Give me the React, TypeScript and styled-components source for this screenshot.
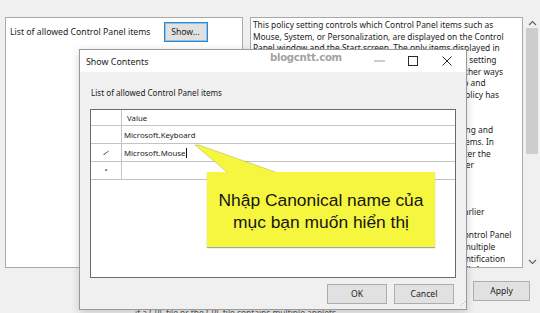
import React, { FC } from "react";
import styled, { createGlobalStyle } from "styled-components";

const GlobalStyle = createGlobalStyle`
  html, body {
    margin: 0;
    padding: 0;
    background: #f0f0f0;
  }
  body {
    width: 540px;
    height: 313px;
    overflow: hidden;
    font-family: "Noto Sans", "Open Sans", sans-serif;
    color: #1c1c1c;
  }
`;

const StyledScreenDiv = styled.div`
  position: relative;
  width: 540px;
  height: 313px;
  overflow: hidden;
  background: #f0f0f0;
`;

const StyledMainWindowDiv = styled.div`
  display: flex;
  flex-direction: column;
  padding-top: 17px;
`;

const StyledPanelRowDiv = styled.div`
  display: flex;
  height: 251px;
`;

const StyledOptionsPanelDiv = styled.div`
  margin-left: 5px;
  width: 231px;
  background: #fff;
  border: 1px solid #a9a9a9;
  padding: 4px 4px;
`;

const StyledOptionRowDiv = styled.div`
  display: flex;
  align-items: center;
  gap: 13px;
`;

const StyledSmallText = styled.span<{ size?: number }>`
  font-size: ${({ size }) => size ?? 8.4}px;
  white-space: nowrap;
  color: #1c1c1c;
`;

const StyledWinButton = styled.button<{ width: number; focused?: boolean }>`
  width: ${({ width }) => width}px;
  height: 20px;
  padding: 0;
  background: #e1e1e1;
  border: 1px solid ${({ focused }) => (focused ? "#2f86d6" : "#adadad")};
  box-shadow: ${({ focused }) => (focused ? "inset 0 0 0 1px #8fc0ea" : "none")};
  font-family: "Noto Sans", "Open Sans", sans-serif;
  font-size: 8.6px;
  color: #1c1c1c;
`;

const StyledHelpPanelDiv = styled.div`
  margin-left: 7px;
  width: 273px;
  background: #fff;
  border: 1px solid #a9a9a9;
  padding: 1px 0 0 2px;
  overflow: hidden;
`;

const StyledHelpLineDiv = styled.div`
  height: 11.7px;
  line-height: 11.7px;
  font-size: 8.4px;
  white-space: nowrap;
  color: #1c1c1c;
`;

const StyledScrollBarDiv = styled.div`
  width: 16px;
  margin-left: 1px;
  display: flex;
  flex-direction: column;
  align-items: center;
  padding: 3px 0;
`;

const StyledScrollThumbDiv = styled.div`
  width: 12px;
  height: 126px;
  margin-top: 2px;
  background: #cdcdcd;
`;

const StyledScrollSpacerDiv = styled.div`
  flex: 1;
`;

const StyledButtonRowDiv = styled.div`
  display: flex;
  justify-content: flex-end;
  padding-right: 10px;
  margin-top: 13px;
`;

const StyledFooterDiv = styled.div`
  margin-top: 6px;
  padding-left: 135px;
  font-size: 8.4px;
  color: #555;
  white-space: nowrap;
`;

const StyledDialogDiv = styled.div`
  position: absolute;
  left: 79px;
  top: 49px;
  width: 386px;
  height: 259px;
  border: 1px solid #9a9a9a;
  background: #f0f0f0;
  box-shadow: 0 2px 8px rgba(0, 0, 0, 0.18);
  display: flex;
  flex-direction: column;
`;

const StyledTitleBarDiv = styled.div`
  height: 22px;
  background: #fff;
  display: flex;
  align-items: center;
  padding-left: 6px;
`;

const StyledTitleText = styled.span`
  font-size: 8.9px;
  color: #1c1c1c;
  flex: 1;
`;

const StyledTitleControlsDiv = styled.div`
  display: flex;
  align-items: center;
  margin-right: 2px;
`;

const StyledTitleControlSpan = styled.span`
  width: 34px;
  height: 22px;
  display: flex;
  align-items: center;
  justify-content: center;
`;

const StyledDialogBodyDiv = styled.div`
  flex: 1;
  display: flex;
  flex-direction: column;
  padding: 15px 10px 4px 10px;
`;

const StyledDialogLabel = styled.span`
  font-size: 8.1px;
  margin-left: 1px;
  white-space: nowrap;
`;

const StyledGridDiv = styled.div`
  margin-top: 11px;
  width: 364px;
  height: 167px;
  border: 1px solid #6a6a6a;
  background: #fff;
  display: flex;
  flex-direction: column;
`;

const StyledGridRowDiv = styled.div<{ height: number }>`
  display: grid;
  grid-template-columns: 31px 1fr;
  height: ${({ height }) => height}px;
  border-bottom: 1px solid #c4c4c4;
`;

const StyledRowHeaderDiv = styled.div`
  border-right: 1px solid #c4c4c4;
  display: flex;
  align-items: center;
  justify-content: center;
  font-size: 7px;
  color: #444;
`;

const StyledCellDiv = styled.div<{ indent?: number }>`
  display: flex;
  align-items: center;
  padding-left: ${({ indent }) => indent ?? 2}px;
  font-size: 7.8px;
  color: #1c1c1c;
  white-space: nowrap;
`;

const StyledCaretSpan = styled.span`
  display: inline-block;
  width: 1px;
  height: 10px;
  margin-left: 1px;
  background: #111;
`;

const StyledDialogButtonRowDiv = styled.div`
  display: flex;
  justify-content: flex-end;
  gap: 7px;
  margin-top: 6px;
  padding-right: 2px;
  position: relative;
`;

const StyledGripSpan = styled.span`
  position: absolute;
  right: -9px;
  bottom: -3px;
  font-size: 6px;
  color: #999;
  letter-spacing: -1px;
`;

const StyledWatermarkSpan = styled.span`
  position: absolute;
  left: 270px;
  top: 51px;
  font-family: "DejaVu Sans Condensed", "DejaVu Sans", sans-serif;
  font-stretch: condensed;
  font-weight: bold;
  font-size: 11.3px;
  letter-spacing: -0.3px;
  color: #a3a3a3;
  text-shadow: 0 0 1px #fff;
`;

const StyledCalloutDiv = styled.div`
  position: absolute;
  left: 207px;
  top: 172px;
  width: 228px;
  height: 75px;
  background: #f7f63e;
  box-shadow: 0 1px 1px rgba(0, 0, 0, 0.35);
  display: flex;
  flex-direction: column;
  align-items: center;
  justify-content: center;
  font-family: "Liberation Sans", Arial, sans-serif;
  font-size: 17.4px;
  line-height: 22px;
  color: #151515;
  padding-top: 2px;
  box-sizing: border-box;
`;

const StyledPointerSvg = styled.svg`
  position: absolute;
  left: 190px;
  top: 140px;
  overflow: visible;
`;

const helpLines = [
  "This policy setting controls which Control Panel items such as",
  "Mouse, System, or Personalization, are displayed on the Control",
  "Panel window and the Start screen. The only items displayed in",
  "Control Panel are those you specify in this setting. This setting",
  "affects the Start screen and Control Panel, as well as other ways",
  "to access Control Panel items such as shortcuts in Help and",
  "Support or command lines that use control.exe. This policy has",
  "no effect on items displayed in PC settings.",
  "",
  "To display a Control Panel item, enable this policy setting and",
  "click Show to access the list of allowed Control Panel items. In",
  "the Show Contents dialog box in the Value column, enter the",
  "Control Panel item's canonical name. For example, enter",
  "Microsoft.Mouse, Microsoft.System, or",
  "Microsoft.Personalization.",
  "",
  "Note: For Windows Vista, Windows Server 2008, and earlier",
  "versions of Windows, the module name should be",
  "entered, for example timedate.cpl or inetcpl.cpl. If a Control Panel",
  "item does not have a CPL file, or the CPL file contains multiple",
  "applets, then its module name and string resource identification",
  "number should be entered, for example @systemcpl.dll,-1.",
];

const Chevron: FC<{ up?: boolean }> = ({ up }) => (
  <svg width="9" height="6" viewBox="0 0 9 6">
    <path
      d={up ? "M1 5 L4.5 1.5 L8 5" : "M1 1 L4.5 4.5 L8 1"}
      fill="none"
      stroke="#606060"
      strokeWidth="1.1"
    />
  </svg>
);

const TitleControls: FC = () => (
  <StyledTitleControlsDiv>
    <StyledTitleControlSpan>
      <svg width="11" height="2" viewBox="0 0 11 2">
        <path d="M0 1 H11" stroke="#9a9a9a" strokeWidth="1" />
      </svg>
    </StyledTitleControlSpan>
    <StyledTitleControlSpan>
      <svg width="10" height="10" viewBox="0 0 10 10">
        <rect x="0.5" y="0.5" width="9" height="9" fill="none" stroke="#2a2a2a" strokeWidth="1" />
      </svg>
    </StyledTitleControlSpan>
    <StyledTitleControlSpan>
      <svg width="10" height="10" viewBox="0 0 10 10">
        <path d="M0.5 0.5 L9.5 9.5 M9.5 0.5 L0.5 9.5" stroke="#2a2a2a" strokeWidth="1" />
      </svg>
    </StyledTitleControlSpan>
  </StyledTitleControlsDiv>
);

const Pencil: FC = () => (
  <svg width="6" height="5" viewBox="0 0 6 5">
    <path d="M1 4.5 L5.5 1" stroke="#444" strokeWidth="0.9" />
    <path d="M0.3 4.8 L1.6 4.3" stroke="#444" strokeWidth="0.9" />
  </svg>
);

const ShowContentsDialog: FC = () => (
  <StyledDialogDiv>
    <StyledTitleBarDiv>
      <StyledTitleText>Show Contents</StyledTitleText>
      <TitleControls />
    </StyledTitleBarDiv>
    <StyledDialogBodyDiv>
      <StyledDialogLabel>List of allowed Control Panel items</StyledDialogLabel>
      <StyledGridDiv>
        <StyledGridRowDiv height={15}>
          <StyledRowHeaderDiv />
          <StyledCellDiv indent={5}>Value</StyledCellDiv>
        </StyledGridRowDiv>
        <StyledGridRowDiv height={17}>
          <StyledRowHeaderDiv />
          <StyledCellDiv>Microsoft.Keyboard</StyledCellDiv>
        </StyledGridRowDiv>
        <StyledGridRowDiv height={17}>
          <StyledRowHeaderDiv>
            <Pencil />
          </StyledRowHeaderDiv>
          <StyledCellDiv>
            Microsoft.Mouse
            <StyledCaretSpan />
          </StyledCellDiv>
        </StyledGridRowDiv>
        <StyledGridRowDiv height={17}>
          <StyledRowHeaderDiv>•</StyledRowHeaderDiv>
          <StyledCellDiv />
        </StyledGridRowDiv>
      </StyledGridDiv>
      <StyledDialogButtonRowDiv>
        <StyledWinButton width={60}>OK</StyledWinButton>
        <StyledWinButton width={60}>Cancel</StyledWinButton>
        <StyledGripSpan>⋰</StyledGripSpan>
      </StyledDialogButtonRowDiv>
    </StyledDialogBodyDiv>
  </StyledDialogDiv>
);

const Callout: FC = () => (
  <>
    <StyledPointerSvg width="90" height="34" viewBox="0 0 90 34">
      <polygon
        points="5,5 9,5 88,33 38,33"
        fill="#f7f63e"
        stroke="rgba(110,110,60,0.45)"
        strokeWidth="0.6"
      />
    </StyledPointerSvg>
    <StyledCalloutDiv>
      <span>Nhập Canonical name của</span>
      <span>mục bạn muốn hiển thị</span>
    </StyledCalloutDiv>
  </>
);

export default function App() {
  return (
    <StyledScreenDiv>
      <GlobalStyle />
      <StyledMainWindowDiv>
        <StyledPanelRowDiv>
          <StyledOptionsPanelDiv>
            <StyledOptionRowDiv>
              <StyledSmallText size={8.7}>List of allowed Control Panel items</StyledSmallText>
              <StyledWinButton width={44} focused>
                Show...
              </StyledWinButton>
            </StyledOptionRowDiv>
          </StyledOptionsPanelDiv>
          <StyledHelpPanelDiv>
            {helpLines.map((line, i) => (
              <StyledHelpLineDiv key={i}>{line || "\u00a0"}</StyledHelpLineDiv>
            ))}
          </StyledHelpPanelDiv>
          <StyledScrollBarDiv>
            <Chevron up />
            <StyledScrollThumbDiv />
            <StyledScrollSpacerDiv />
            <Chevron />
          </StyledScrollBarDiv>
        </StyledPanelRowDiv>
        <StyledButtonRowDiv>
          <StyledWinButton width={57}>Apply</StyledWinButton>
        </StyledButtonRowDiv>
        <StyledFooterDiv>if a CPL file or the CPL file contains multiple applets</StyledFooterDiv>
      </StyledMainWindowDiv>
      <ShowContentsDialog />
      <StyledWatermarkSpan>blogcntt.com</StyledWatermarkSpan>
      <Callout />
    </StyledScreenDiv>
  );
}
